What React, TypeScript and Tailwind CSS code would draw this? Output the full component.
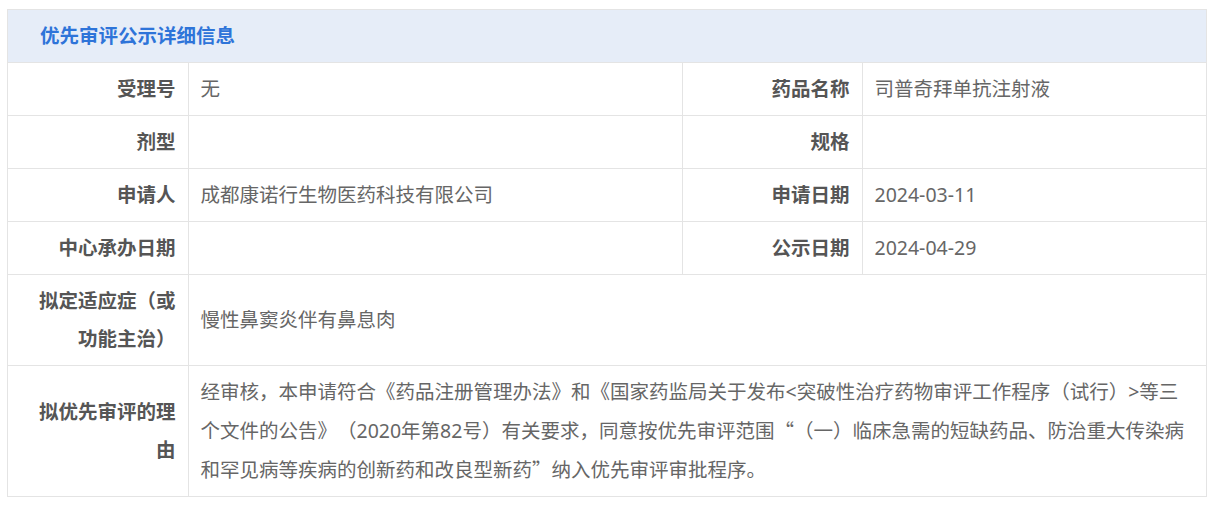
import { FC, ReactNode } from "react";

const Label: FC<{ children: ReactNode }> = ({ children }) => (
  <td className="border border-[#e4e4e4] pl-[24px] pr-[12px] py-[7px] text-right align-middle font-bold text-[#555]">
    {children}
  </td>
);

const Value: FC<{ children?: ReactNode; colSpan?: number }> = ({ children, colSpan }) => (
  <td
    colSpan={colSpan}
    className="border border-[#e4e4e4] pl-[12px] pr-[20px] py-[7px] text-left align-middle text-[#666]"
  >
    {children}
  </td>
);

// curly quotes in the CJK face so they are full width
const Q: FC<{ children: ReactNode }> = ({ children }) => (
  <span className="font-['Noto_Sans_CJK_SC',sans-serif]">{children}</span>
);

const App: FC = () => {
  return (
    <div
      className="min-h-[505px] bg-white pt-[9px] pl-[7px] [text-spacing-trim:space-all]"
      style={{ fontFamily: '"Noto Sans", "Noto Sans CJK SC", sans-serif' }}
    >
      <div className="w-[1200px] border border-[#e4e4e4]">
        <div className="h-[53px] bg-[#e6edf8] pl-[32px] flex items-center border-b border-[#e4e4e4]">
          <h2 className="text-[19.5px] font-bold text-[#2e74d9]">优先审评公示详细信息</h2>
        </div>
        <table className="w-full table-fixed border-collapse border-hidden text-[19.5px] leading-[38px]">
          <colgroup>
            <col className="w-[180px]" />
            <col className="w-[494px]" />
            <col className="w-[180px]" />
            <col />
          </colgroup>
          <tbody>
            <tr>
              <Label>受理号</Label>
              <Value>无</Value>
              <Label>药品名称</Label>
              <Value>司普奇拜单抗注射液</Value>
            </tr>
            <tr>
              <Label>剂型</Label>
              <Value />
              <Label>规格</Label>
              <Value />
            </tr>
            <tr>
              <Label>申请人</Label>
              <Value>成都康诺行生物医药科技有限公司</Value>
              <Label>申请日期</Label>
              <Value>2024-03-11</Value>
            </tr>
            <tr>
              <Label>中心承办日期</Label>
              <Value />
              <Label>公示日期</Label>
              <Value>2024-04-29</Value>
            </tr>
            <tr>
              <Label>拟定适应症（或功能主治）</Label>
              <Value colSpan={3}>慢性鼻窦炎伴有鼻息肉</Value>
            </tr>
            <tr>
              <Label>拟优先审评的理由</Label>
              <Value colSpan={3}>
                经审核，本申请符合《药品注册管理办法》和《国家药监局关于发布&lt;突破性治疗药物审评工作程序（试行）&gt;等三个文件的公告》（2020年第82号）有关要求，同意按优先审评范围<Q>“</Q>（一）临床急需的短缺药品、防治重大传染病和罕见病等疾病的创新药和改良型新药<Q>”</Q>纳入优先审评审批程序。
              </Value>
            </tr>
          </tbody>
        </table>
      </div>
    </div>
  );
};

export default App;
